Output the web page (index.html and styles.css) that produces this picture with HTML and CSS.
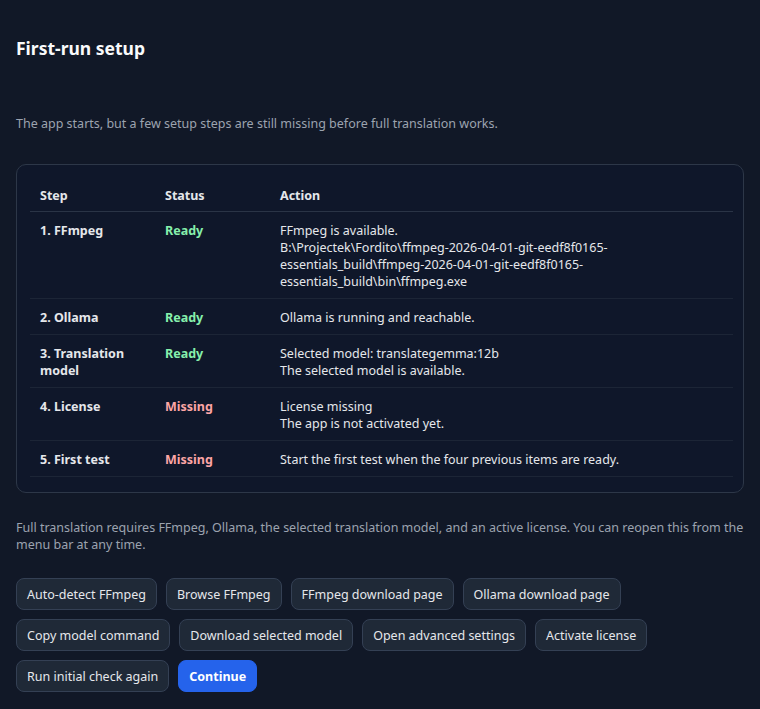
FILE: index.html
```html
<!DOCTYPE html>
<html lang="en">
<head>
<meta charset="utf-8">
<title>First-run setup</title>
<link rel="stylesheet" href="styles.css">
</head>
<body>
<main class="page">
  <h1 class="title">First-run setup</h1>
  <p class="intro">The app starts, but a few setup steps are still missing before full translation works.</p>
  <section class="card">
    <table class="steps">
      <thead>
        <tr><th class="c-step">Step</th><th class="c-status">Status</th><th class="c-action">Action</th></tr>
      </thead>
      <tbody>
        <tr>
          <td class="step">1. FFmpeg</td>
          <td class="ok">Ready</td>
          <td>FFmpeg is available.<br>B:\Projectek\Fordito\ffmpeg-2026-04-01-git-eedf8f0165-<br>essentials_build\ffmpeg-2026-04-01-git-eedf8f0165-<br>essentials_build\bin\ffmpeg.exe</td>
        </tr>
        <tr>
          <td class="step">2. Ollama</td>
          <td class="ok">Ready</td>
          <td>Ollama is running and reachable.</td>
        </tr>
        <tr>
          <td class="step">3. Translation model</td>
          <td class="ok">Ready</td>
          <td>Selected model: translategemma:12b<br>The selected model is available.</td>
        </tr>
        <tr>
          <td class="step">4. License</td>
          <td class="bad">Missing</td>
          <td>License missing<br>The app is not activated yet.</td>
        </tr>
        <tr>
          <td class="step">5. First test</td>
          <td class="bad">Missing</td>
          <td>Start the first test when the four previous items are ready.</td>
        </tr>
      </tbody>
    </table>
  </section>
  <p class="note">Full translation requires FFmpeg, Ollama, the selected translation model, and an active license. You can reopen this from the menu bar at any time.</p>
  <div class="actions">
    <button class="btn">Auto-detect FFmpeg</button>
    <button class="btn">Browse FFmpeg</button>
    <button class="btn">FFmpeg download page</button>
    <button class="btn">Ollama download page</button>
    <button class="btn">Copy model command</button>
    <button class="btn">Download selected model</button>
    <button class="btn">Open advanced settings</button>
    <button class="btn">Activate license</button>
    <button class="btn">Run initial check again</button>
    <button class="btn primary">Continue</button>
  </div>
</main>
</body>
</html>
```

FILE: styles.css
```css
html, body {
  margin: 0;
  padding: 0;
  background: #111827;
}
body {
  font-family: "Noto Sans", "Open Sans", sans-serif;
  font-size: 12.5px;
  line-height: 17px;
  color: #e5e7eb;
}
.page {
  padding: 36px 16px 0 16px;
}
.title {
  margin: 0;
  font-size: 17.5px;
  line-height: 24px;
  font-weight: 700;
  color: #f9fafb;
}
.intro {
  margin: 55px 0 0 0;
  color: #9ca3af;
}
.card {
  margin-top: 32px;
  background: #0f172a;
  border: 1px solid #2d3748;
  border-radius: 10px;
  padding: 11px 10px 15px 13px;
}
.steps {
  width: 100%;
  border-collapse: collapse;
}
.steps th, .steps td {
  text-align: left;
  vertical-align: top;
  padding: 10px 10px 8px;
}
.steps th {
  font-weight: 700;
  padding: 11px 10px 7px;
  border-bottom: 1px solid #2a3446;
}
.steps td {
  border-bottom: 1px solid #1c2536;
}
.c-step { width: 105px; }
.c-status { width: 95px; }
.step { font-weight: 700; }
.ok { color: #86efac; font-weight: 700; }
.bad { color: #fca5a5; font-weight: 700; }
.note {
  margin: 26px 0 0 0;
  color: #9ca3af;
}
.actions {
  margin-top: 25px;
  display: flex;
  flex-wrap: wrap;
  gap: 9px;
}
.btn {
  height: 32px;
  padding: 0 10px;
  font: inherit;
  color: #e5e7eb;
  background: #1f2937;
  border: 1px solid #344054;
  border-radius: 8px;
}
.btn.primary {
  background: #2563eb;
  border-color: #2563eb;
  color: #ffffff;
  font-weight: 700;
}
```
